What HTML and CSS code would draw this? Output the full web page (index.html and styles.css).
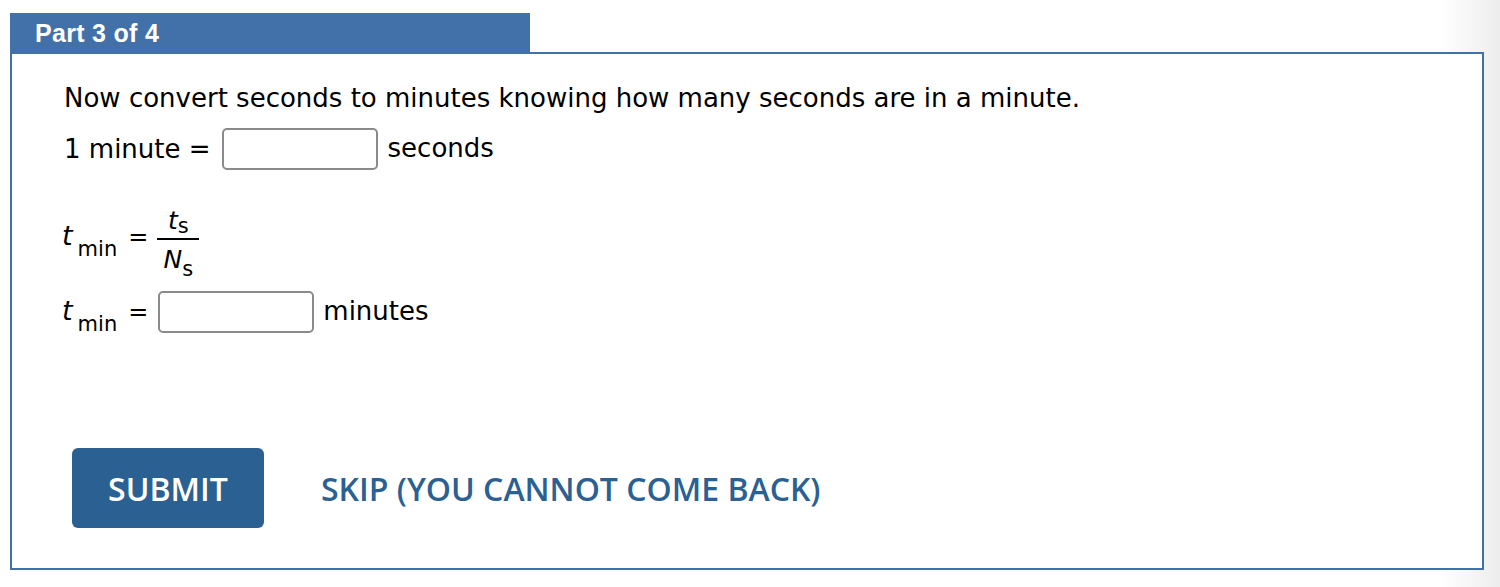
FILE: index.html
```html
<!DOCTYPE html>
<html lang="en">
<head>
  <meta charset="UTF-8" />
  <title>Part 3 of 4</title>
  <link rel="stylesheet" href="styles.css">
</head>
<body>
  <div class="part">
    <div class="part-tab">Part 3 of 4</div>
    <div class="part-box">
      <p class="prompt">Now convert seconds to minutes knowing how many seconds are in a minute.</p>

      <div class="row row-minute">
        <span>1 minute =</span>
        <input type="text" class="answer">
        <span class="unit">seconds</span>
      </div>

      <div class="row-frac">
        <span class="math lhs"><i>t</i><sub>min</sub><span class="eq">=</span></span>
        <span class="frac">
          <span class="num"><i>t</i><sub>s</sub></span>
          <span class="den"><i>N</i><sub>s</sub></span>
        </span>
      </div>

      <div class="row row-result">
        <span class="math"><i>t</i><sub>min</sub><span class="eq">=</span></span>
        <input type="text" class="answer">
        <span class="unit">minutes</span>
      </div>

      <div class="actions">
        <button class="submit">SUBMIT</button>
        <a class="skip" href="#">SKIP (YOU CANNOT COME BACK)</a>
      </div>
    </div>
  </div>
</body>
</html>
```

FILE: styles.css
```css
body {
  margin: 0;
  padding: 13px 0 0 10px;
  height: 574px;
  background: linear-gradient(to right, #fff 1440px, #ededed 1500px);
  font-family: "DejaVu Sans", Verdana, sans-serif;
  color: #000;
}
.part {
  width: 1474px;
}
.part-tab {
  width: 495px;
  height: 39px;
  padding-left: 25px;
  background-color: #4270a8;
  color: #fff;
  font-family: "Liberation Sans", Arial, sans-serif;
  font-weight: bold;
  font-size: 25px;
  line-height: 40px;
  letter-spacing: 0.3px;
}
.part-box {
  height: 514px;
  padding-left: 52px;
  border: 2px solid #4270a8;
  background: #fff;
  font-size: 26px;
}
.prompt {
  margin: 29px 0 0;
  line-height: 30px;
}
.row {
  display: flex;
  align-items: center;
  line-height: 30px;
}
.row-minute {
  margin-top: 15px;
}
.row-minute .answer {
  margin: 0 10px 0 11px;
}
.row-result {
  margin-top: 18px;
}
.row-result .answer {
  margin: 0 9px 0 10px;
}
.answer {
  box-sizing: border-box;
  width: 156px;
  height: 42px;
  padding: 0;
  border: 2px solid #8a8a8a;
  border-radius: 5px;
  background: #fff;
}
.unit {
  margin-top: -2px;
}

/* math */
.math {
  font-size: 24px;
  line-height: 22px;
}
.math i {
  margin-left: -2px;
  font-size: 27px;
}
.math sub, .frac sub {
  font-size: 21px;
  line-height: 0;
}
.math sub {
  vertical-align: -11px;
  margin-left: 5px;
}
.eq {
  margin-left: 11px;
}
.row-frac {
  display: flex;
  align-items: flex-start;
  margin-top: 40px;
}
.row-frac .lhs {
  margin: 13px 9px 0 0;
  line-height: 26px;
}
.frac {
  display: inline-flex;
  flex-direction: column;
  align-items: center;
  font-size: 25px;
}
.frac .num {
  width: 42px;
  padding-bottom: 6px;
  border-bottom: 2px solid #000;
  line-height: 22px;
  text-align: center;
}
.frac .num sub {
  vertical-align: -4px;
}
.frac .den {
  padding-top: 7px;
  line-height: 26px;
}
.frac .den sub {
  vertical-align: -8px;
}

.actions {
  display: flex;
  align-items: center;
  gap: 57px;
  margin: 115px 0 0 8px;
}
.submit {
  width: 192px;
  height: 80px;
  padding: 0;
  border: 0;
  border-radius: 6px;
  background-color: #2b6092;
  color: #fff;
  font-family: "Open Sans", sans-serif;
  font-weight: 600;
  font-size: 32px;
}
.skip {
  color: #2b6092;
  text-decoration: none;
  font-family: "Open Sans", sans-serif;
  font-weight: 600;
  font-size: 32px;
}
```
